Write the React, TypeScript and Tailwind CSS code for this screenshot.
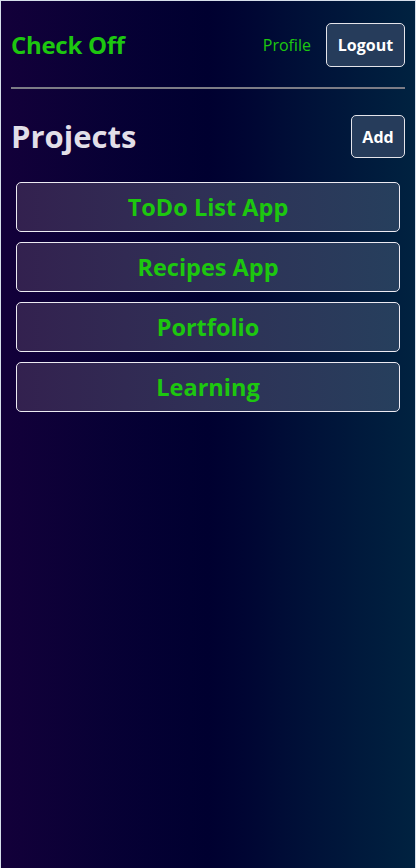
import React from "react";

const projects = ["ToDo List App", "Recipes App", "Portfolio", "Learning"];

export default function App() {
  return (
    <div
      className="min-h-[868px] w-full border-x border-t border-[#d6dfeb] bg-gradient-to-r from-[#13003a] via-[#000030] to-[#002240]"
      style={{ fontFamily: '"Open Sans", "Noto Sans", sans-serif' }}
    >
      <div className="px-[10px]">
        <header className="flex items-center justify-between pt-[22px]">
          <h1 className="text-[24px] font-bold tracking-[-0.3px] text-[#1dc70f]">Check Off</h1>
          <nav className="flex items-center gap-[15px]">
            <a className="text-[16px] text-[#1dc70f]">Profile</a>
            <button className="h-[44px] w-[79px] rounded-[5px] border border-[#e4e4ea] bg-[#263c5b] text-[16px] font-bold text-white">
              Logout
            </button>
          </nav>
        </header>
        <div className="mt-[20px] h-[2px] bg-[#7c7c86]" />

        <div className="mt-[26px] flex items-center justify-between">
          <h2 className="text-[31px] font-bold leading-[43px] text-[#e2dfe8]">Projects</h2>
          <button className="h-[43px] w-[54px] rounded-[5px] border border-[#e4e4ea] bg-[#263c5b] text-[16px] font-bold text-white">
            Add
          </button>
        </div>

        <ul className="mt-[24px] flex flex-col gap-[10px] px-[5px]">
          {projects.map((p) => (
            <li
              key={p}
              className="flex h-[50px] items-center justify-center rounded-[5px] border border-[#eceaf2] bg-gradient-to-r from-[#33214f] to-[#263f5d] pt-[2px] text-[23.5px] font-bold text-[#1dc70f]"
            >
              {p}
            </li>
          ))}
        </ul>
      </div>
    </div>
  );
}
